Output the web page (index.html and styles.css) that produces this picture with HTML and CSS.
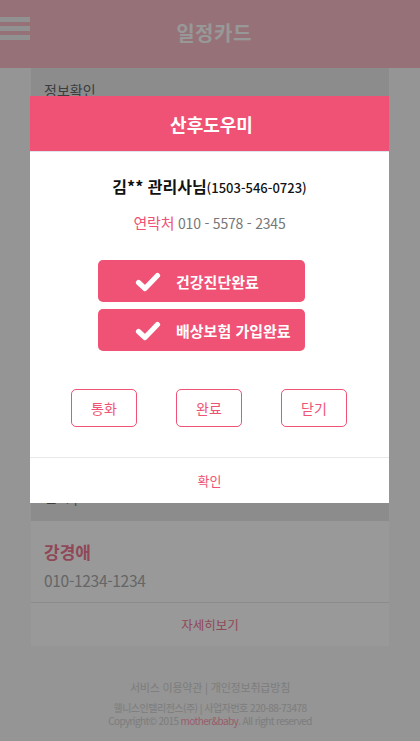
FILE: index.html
```html
<!DOCTYPE html>
<html lang="ko">
<head>
<meta charset="utf-8">
<title>일정카드</title>
<link rel="stylesheet" href="styles.css">
</head>
<body>
<header class="topbar">
  <div class="menu"><span></span><span></span><span></span></div>
  <h1 class="title">일정카드</h1>
</header>
<main class="content">
  <section class="card">
    <div class="card-top">
      <p class="section-label">정보확인</p>
      <p class="hidden-line">일시 | 2015. 01. 01</p>
    </div>
    <div class="card-bottom">
      <div class="person">
        <p class="person-name">강경애</p>
        <p class="person-phone">010-1234-1234</p>
      </div>
      <a class="more">자세히보기</a>
    </div>
  </section>
  <footer class="footer">
    <p class="links">서비스 이용약관 | 개인정보취급방침</p>
    <p class="company">웰니스인텔리전스(주) | 사업자번호 220-88-73478</p>
    <p class="copy">Copyright© 2015 <span class="brand">mother&amp;baby</span>. All right reserved</p>
  </footer>
</main>
<div class="dim"></div>
<div class="modal">
  <div class="modal-head">산후도우미</div>
  <div class="modal-body">
    <p class="mgr"><strong>김** 관리사님</strong><span class="mgr-no">(1503-546-0723)</span></p>
    <p class="contact"><span class="contact-label">연락처</span> 010 - 5578 - 2345</p>
    <div class="status">
      <div class="badge"><svg viewBox="0 0 26 20" width="26" height="20"><path d="M3.5 10.5 L10 16.5 L22.5 3.5" fill="none" stroke="#fff" stroke-width="5.2" stroke-linecap="round" stroke-linejoin="round"/></svg><span>건강진단완료</span></div>
      <div class="badge"><svg viewBox="0 0 26 20" width="26" height="20"><path d="M3.5 10.5 L10 16.5 L22.5 3.5" fill="none" stroke="#fff" stroke-width="5.2" stroke-linecap="round" stroke-linejoin="round"/></svg><span>배상보험 가입완료</span></div>
    </div>
    <div class="actions">
      <button class="act">통화</button>
      <button class="act">완료</button>
      <button class="act">닫기</button>
    </div>
  </div>
  <div class="modal-foot">확인</div>
</div>
</body>
</html>
```
FILE: styles.css
```css
* { box-sizing: border-box; }
html, body { margin: 0; padding: 0; }
body {
  font-family: "Noto Sans CJK KR", "Noto Sans", sans-serif;
  background: #f8f8f8;
  width: 420px;
  height: 741px;
  overflow: hidden;
  position: relative;
}
p { margin: 0; }

.topbar {
  height: 68px;
  background: #fbbcc8;
  display: flex;
  align-items: center;
  position: relative;
}
.menu {
  display: flex;
  flex-direction: column;
  gap: 4px;
  margin-top: -12px;
}
.menu span { display: block; width: 30px; height: 5px; background: #f2f2f2; }
.title {
  margin: 0;
  flex: 1;
  text-align: center;
  padding-right: 22px;
  font-size: 20px;
  font-weight: 700;
  color: #fdfdfd;
  letter-spacing: 0.5px;
  margin-top: -3px;
}

.content { padding: 0 31px; }
.card { background: #fff; }
.card-top {
  height: 453px;
  background: #e9e9e9;
  padding: 12px 13px 0;
  position: relative;
}
.section-label { font-size: 14px; color: #666; line-height: 20px; }
.hidden-line { position: absolute; left: 13px; top: 418px; font-size: 14px; color: #666; }
.card-bottom { background: #fff; }
.person { padding: 17px 13px 0; height: 82px; border-bottom: 1px solid #e8e8e8; }
.person-name { font-size: 17px; font-weight: 700; color: #f07893; line-height: 28px; }
.person-phone { font-size: 15.5px; color: #aaa; line-height: 28px; letter-spacing: -0.3px; }
.more {
  display: block;
  text-align: center;
  font-size: 12.5px;
  color: #f07893;
  line-height: 44px;
  height: 43px;
}

.footer { text-align: center; padding-top: 33px; color: #d0d0d0; }
.links { font-size: 11px; line-height: 16px; letter-spacing: -0.2px; }
.company { font-size: 10px; line-height: 13px; margin-top: 6px; letter-spacing: -0.5px; }
.copy { font-size: 10px; line-height: 13px; letter-spacing: -0.6px; }
.brand { color: #ff9cb2; }

.dim {
  position: absolute;
  inset: 0;
  background: rgba(0, 0, 0, 0.4);
}

.modal {
  position: absolute;
  left: 30px;
  top: 96px;
  width: 359px;
  background: #fff;
}
.modal-head {
  height: 56px;
  background: #ef5274;
  color: #fff;
  font-size: 18px;
  font-weight: 700;
  display: flex;
  align-items: center;
  justify-content: center;
  border-bottom: 1px solid #dfe3ea;
  padding-left: 4px;
}
.modal-body { padding-top: 22px; }
.mgr { text-align: center; line-height: 24px; color: #111; }
.mgr strong { font-size: 16px; font-weight: 700; }
.mgr-no { font-size: 13px; font-weight: 500; }
.contact {
  margin-top: 12px;
  text-align: center;
  font-size: 14px;
  line-height: 22px;
  color: #777;
  letter-spacing: -0.2px;
}
.contact-label { color: #ef5274; font-size: 15px; }
.status {
  margin: 26px 0 0 68px;
  display: flex;
  flex-direction: column;
  gap: 7px;
  width: 207px;
}
.badge {
  height: 42px;
  background: #ef5274;
  border-radius: 5px;
  display: flex;
  align-items: center;
  padding-left: 37px;
  gap: 15px;
  color: #fff;
  font-size: 15px;
  font-weight: 700;
}
.badge svg { flex: none; margin-top: 1px; }
.actions {
  margin-top: 38px;
  display: flex;
  justify-content: center;
  gap: 39px;
  padding-bottom: 30px;
  border-bottom: 1px solid #e8e8e8;
  padding-right: 1px;
}
.act {
  width: 66px;
  height: 38px;
  border: 1px solid #ef5274;
  border-radius: 5px;
  background: #fff;
  color: #ef5274;
  font-family: "Noto Sans CJK KR", "Noto Sans", sans-serif;
  font-size: 14px;
  padding: 0;
}
.modal-foot {
  height: 45px;
  display: flex;
  align-items: center;
  justify-content: center;
  font-size: 13px;
  color: #ef5274;
}
```
